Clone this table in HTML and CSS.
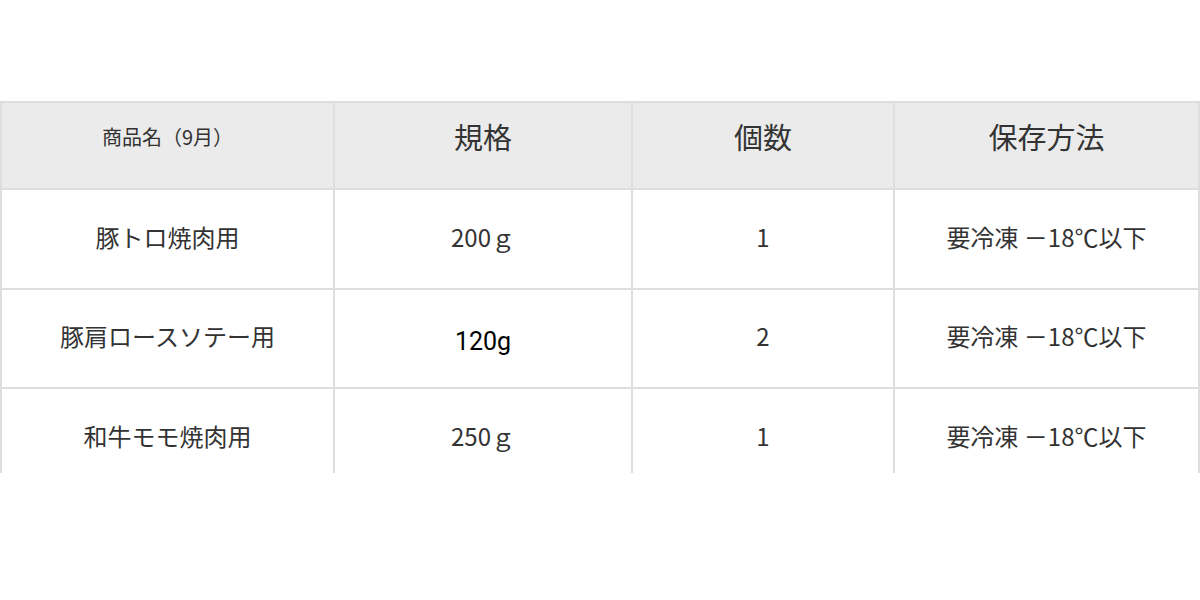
FILE: index.html
```html
<!DOCTYPE html>
<html lang="ja">
<head>
<meta charset="utf-8">
<link rel="stylesheet" href="styles.css">
</head>
<body>
<div class="wrap">
<table class="spec">
  <colgroup>
    <col class="c1"><col class="c2"><col class="c3"><col class="c4">
  </colgroup>
  <thead>
    <tr>
      <th class="small">商品名（9月）</th>
      <th>規格</th>
      <th>個数</th>
      <th>保存方法</th>
    </tr>
  </thead>
  <tbody>
    <tr>
      <td>豚トロ焼肉用</td>
      <td>200ｇ</td>
      <td>1</td>
      <td>要冷凍 －18℃以下</td>
    </tr>
    <tr>
      <td>豚肩ロースソテー用</td>
      <td><span class="roboto">120g</span></td>
      <td>2</td>
      <td>要冷凍 －18℃以下</td>
    </tr>
    <tr>
      <td>和牛モモ焼肉用</td>
      <td>250ｇ</td>
      <td>1</td>
      <td>要冷凍 －18℃以下</td>
    </tr>
  </tbody>
</table>
</div>
</body>
</html>
```

FILE: styles.css
```css
html, body {
  margin: 0;
  padding: 0;
  background: #fff;
}
.wrap {
  padding-top: 101px;
  height: 473px;
  box-sizing: border-box;
  overflow: hidden;
}
.spec {
  width: 1198px;
  border-collapse: collapse;
  table-layout: fixed;
  font-family: "Noto Sans CJK JP", "Noto Sans", sans-serif;
  color: #333;
}
.c1 { width: 333px; }
.c2 { width: 298px; }
.c3 { width: 262px; }
.c4 { width: 305px; }
.spec th, .spec td {
  border: 2px solid #dedede;
  text-align: center;
  vertical-align: middle;
  padding: 0;
}
.spec th {
  background: #ebebeb;
  height: 87px;
  font-size: 29px;
  font-weight: 400;
  padding-bottom: 19px;
  box-sizing: border-box;
}
.spec th.small {
  font-size: 20px;
}
.spec td {
  height: 99.5px;
  font-size: 24px;
  padding-bottom: 5px;
  box-sizing: border-box;
}
.roboto {
  font-family: Roboto, "Noto Sans", sans-serif;
  font-size: 25px;
  color: #000;
  position: relative;
  top: 4px;
}
```
